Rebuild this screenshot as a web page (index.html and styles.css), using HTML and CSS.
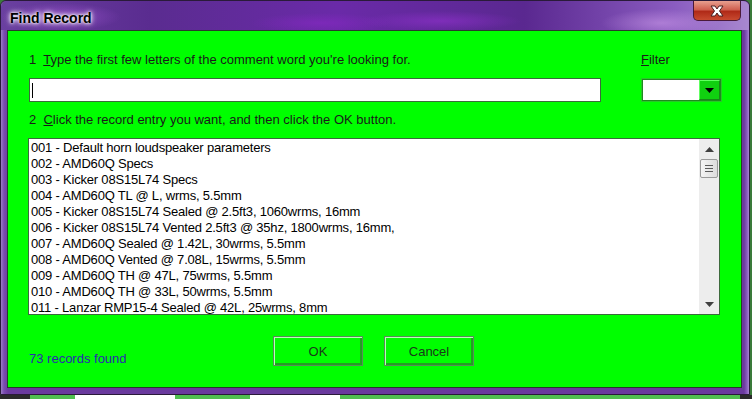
FILE: index.html
```html
<!DOCTYPE html>
<html lang="en">
<head>
	<meta charset="UTF-8">
	<title>Find Record</title>
<link rel="stylesheet" href="styles.css">
</head>
<body>

<div class="window">
	<div class="titleBar">
		<div class="title">Find Record</div>
		<div class="closeBtn">
			<svg width="22" height="14" viewBox="0 0 22 14">
				<path d="M5 2 L9 2 L11 5 L13 2 L17 2 L13.5 7 L17 12 L13 12 L11 9 L9 12 L5 12 L8.5 7 Z" fill="#ffffff" stroke="#4a2020" stroke-width="1"/>
			</svg>
		</div>
	</div>

	<div class="client">
		<div class="row">
			<div class="label wide">1&nbsp; <u>T</u>ype the first few letters of the comment word you're looking for.</div>
			<div class="label filterLabel"><u>F</u>ilter</div>
		</div>

		<div class="row inputRow">
			<div class="textBox"><span class="caret"></span></div>
			<div class="combo">
				<div class="comboField"></div>
				<div class="comboBtn">
					<svg width="9" height="5" viewBox="0 0 9 5"><path d="M0 0 L9 0 L4.5 5 Z" fill="#000"/></svg>
				</div>
			</div>
		</div>

		<div class="label label2">2&nbsp; <u>C</u>lick the record entry you want, and then click the OK button.</div>

		<div class="listBox">
			<div class="items">
				<div class="item">001 - Default horn loudspeaker parameters</div>
				<div class="item">002 - AMD60Q Specs</div>
				<div class="item">003 - Kicker 08S15L74 Specs</div>
				<div class="item">004 - AMD60Q TL @ L, wrms, 5.5mm</div>
				<div class="item">005 - Kicker 08S15L74 Sealed @ 2.5ft3, 1060wrms, 16mm</div>
				<div class="item">006 - Kicker 08S15L74 Vented 2.5ft3 @ 35hz, 1800wrms, 16mm,</div>
				<div class="item">007 - AMD60Q Sealed @ 1.42L, 30wrms, 5.5mm</div>
				<div class="item">008 - AMD60Q Vented @ 7.08L, 15wrms, 5.5mm</div>
				<div class="item">009 - AMD60Q TH @ 47L, 75wrms, 5.5mm</div>
				<div class="item">010 - AMD60Q TH @ 33L, 50wrms, 5.5mm</div>
				<div class="item">011 - Lanzar RMP15-4 Sealed @ 42L, 25wrms, 8mm</div>
			</div>
			<div class="scrollBar">
				<div class="arrow">
					<svg width="9" height="5" viewBox="0 0 9 5"><path d="M0 5 L9 5 L4.5 0 Z" fill="#404040"/></svg>
				</div>
				<div class="thumb">
					<span></span><span></span><span></span>
				</div>
				<div class="track"></div>
				<div class="arrow">
					<svg width="9" height="5" viewBox="0 0 9 5"><path d="M0 0 L9 0 L4.5 5 Z" fill="#404040"/></svg>
				</div>
			</div>
		</div>

		<div class="footer">
			<div class="found">73 records found</div>
			<div class="btn">OK</div>
			<div class="btn">Cancel</div>
		</div>
	</div>
</div>

<div class="under"></div>

</body>
</html>
```

FILE: styles.css
```css
*{
	margin: 0;
	padding: 0;
	box-sizing: border-box;
}

body{
	width: 752px;
	height: 399px;
	overflow: hidden;
	background: #3a7a3a;
	font-family: "Liberation Sans", Arial, sans-serif;
}

/* window frame */
.window{
	width: 750px;
	height: 395px;
	border: 1px solid #2a1a3a;
	border-radius: 6px 6px 0 0;
	background: linear-gradient(90deg, #9a7cc4 0px, #7a4cb0 3px, #6a3a9e 7px, #6a3a9e 743px, #8a5cc0 746px, #b89ad8 749px);
	padding: 0 7px 6px 6px;
	display: flex;
	flex-direction: column;
}

.titleBar{
	height: 29px;
	display: flex;
	justify-content: space-between;
	align-items: flex-start;
	margin: 0 -7px 0 -6px;
	padding: 0 8px 0 9px;
	border-radius: 6px 6px 0 0;
	background:
		radial-gradient(ellipse 60px 14px at 60px 16px, rgba(170, 90, 220, 0.6), transparent),
		radial-gradient(ellipse 70px 10px at 320px 22px, rgba(140, 40, 200, 0.55), transparent),
		radial-gradient(ellipse 80px 10px at 440px 20px, rgba(150, 50, 210, 0.55), transparent),
		radial-gradient(ellipse 60px 14px at 660px 22px, rgba(200, 150, 230, 0.6), transparent),
		linear-gradient(90deg, #6a40a0 0%, #5a2c90 20%, #6a2aa8 45%, #5a2890 70%, #8a5cc0 90%, #a888d0 100%);
}

.title{
	font-weight: bold;
	font-size: 14px;
	line-height: 16px;
	margin-top: 9px;
	color: #000;
	text-shadow: 0 0 6px #fff, 0 0 4px #fff, 0 0 2px #fff;
}

.closeBtn{
	width: 48px;
	height: 20px;
	border: 1px solid #4a1a3a;
	border-top: none;
	border-radius: 0 0 5px 5px;
	background: linear-gradient(180deg, #e8a090 0%, #d06050 45%, #b02a18 55%, #c84a30 100%);
	display: flex;
	align-items: center;
	justify-content: center;
}

/* green client area */
.client{
	flex: 1;
	border: 1px solid #2a3a2a;
	background: #00ff00;
	padding: 21px 19px 0 21px;
	display: flex;
	flex-direction: column;
}

.row{
	display: flex;
}

.label{
	font-size: 13px;
	line-height: 16px;
	color: #1a1a1a;
}

.wide{
	width: 612px;
}

.inputRow{
	margin-top: 10px;
	height: 24px;
}

.textBox{
	width: 572px;
	height: 24px;
	background: #fff;
	border: 1px solid #3c6a3c;
	padding: 4px 0 0 2px;
}

.caret{
	display: block;
	width: 1px;
	height: 15px;
	background: #000;
}

.combo{
	width: 81px;
	height: 24px;
	margin-left: 40px;
	border: 1px solid #28c828;
	display: flex;
	padding: 1px;
	background: #208a20;
}

.comboField{
	flex: 1;
	background: #fff;
}

.comboBtn{
	width: 21px;
	background: #10d010;
	border: 1px solid #60ff60;
	border-right-color: #188818;
	border-bottom-color: #188818;
	display: flex;
	align-items: center;
	justify-content: center;
}

.label2{
	margin-top: 10px;
}

/* record list */
.listBox{
	margin-top: 10px;
	width: 692px;
	height: 177px;
	margin-left: -1px;
	border: 1px solid #3c6a3c;
	background: #fff;
	display: flex;
}

.items{
	flex: 1;
	padding: 1px 0 0 2px;
}

.item{
	font-size: 13px;
	line-height: 16px;
	letter-spacing: -0.2px;
	color: #000;
	white-space: nowrap;
}

.scrollBar{
	width: 20px;
	background: #ededed;
	display: flex;
	flex-direction: column;
	align-items: center;
}

.arrow{
	height: 20px;
	display: flex;
	align-items: center;
	justify-content: center;
}

.thumb{
	width: 18px;
	height: 19px;
	border: 1px solid #9a9a9a;
	border-radius: 2px;
	background: linear-gradient(90deg, #f4f4f4, #dcdcdc);
	display: flex;
	flex-direction: column;
	align-items: center;
	justify-content: center;
	gap: 2px;
}

.thumb span{
	width: 8px;
	height: 1px;
	background: #5a5a5a;
}

.track{
	flex: 1;
}

/* bottom buttons */
.footer{
	display: flex;
	margin-top: 21px;
	height: 30px;
}

.found{
	width: 244px;
	font-size: 13px;
	line-height: 16px;
	color: #2a2ab0;
	padding-top: 15px;
}

.btn{
	width: 90px;
	height: 30px;
	margin-right: 21px;
	border: 1px solid #5a8a5a;
	box-shadow: inset 1px 1px #b8ffb8, inset -2px -2px #22a022;
	background: #00ff00;
	font-size: 13px;
	color: #1a3a1a;
	display: flex;
	align-items: center;
	justify-content: center;
}

.under{
	height: 4px;
	background: linear-gradient(90deg, #2a2a2a 0 30px, #50c050 30px 75px, #ffffff 75px 175px, #50c050 175px 250px, #ffffff 250px 340px, #50c050 340px 740px, #2a2a2a 740px);
}
```
